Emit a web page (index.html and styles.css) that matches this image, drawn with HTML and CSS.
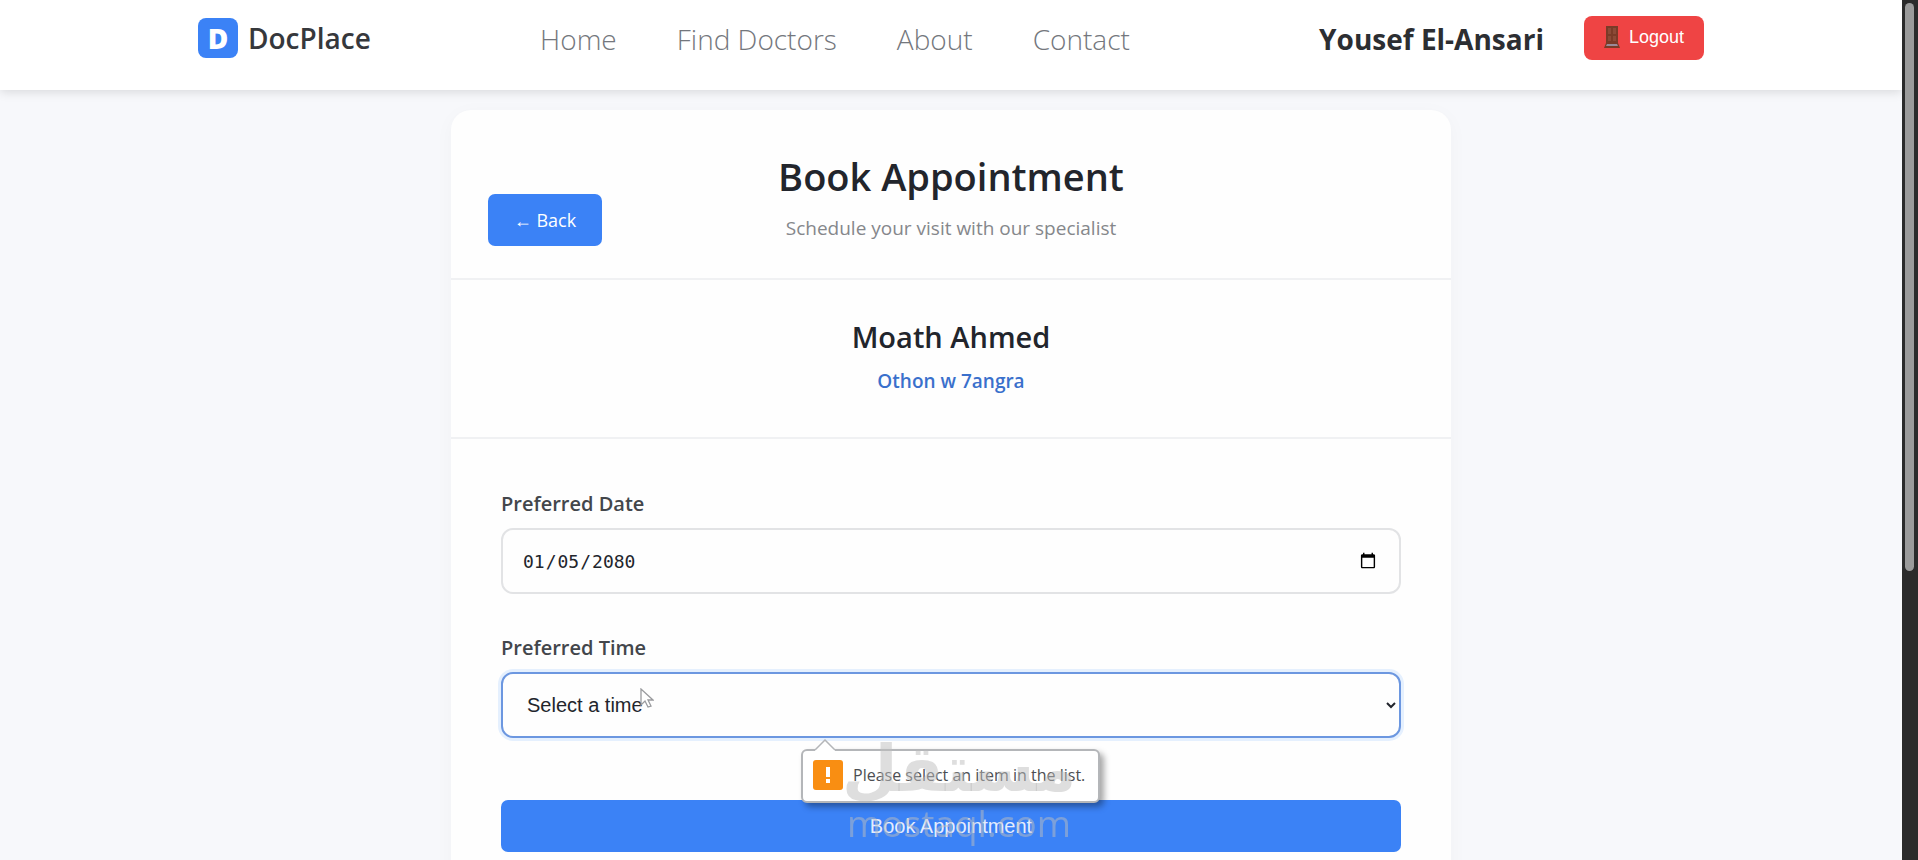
FILE: index.html
```html
<!DOCTYPE html>
<html lang="en">
<head>
<meta charset="utf-8">
<title>DocPlace - Book Appointment</title>
<link rel="stylesheet" href="styles.css">
</head>
<body>
<div class="window">
  <div class="page">
    <header class="navbar">
      <div class="navbar-inner">
        <a class="brand" href="#"><span class="brand-mark">D</span><span>DocPlace</span></a>
        <nav class="nav-links">
          <a href="#">Home</a>
          <a href="#">Find Doctors</a>
          <a href="#">About</a>
          <a href="#">Contact</a>
        </nav>
        <div class="account">
          <span class="user-name">Yousef El-Ansari</span>
          <button class="logout" type="button">
            <svg class="door" viewBox="0 0 16 22" aria-hidden="true">
              <path fill="#7a3b28" d="M2 0h12v17l2 5H0l2-5z"/>
              <path fill="#8c4a37" d="M4 2h3v6H4zM9 2h3v6H9zM4 10h3v5H4zM9 10h3v5H9z"/>
              <path fill="#9a8a98" d="M3 18h10l1 2H2z"/>
            </svg>
            <span>Logout</span>
          </button>
        </div>
      </div>
    </header>
    <main class="card">
      <div class="card-header">
        <button class="back" type="button">← Back</button>
        <h1>Book Appointment</h1>
        <p>Schedule your visit with our specialist</p>
      </div>
      <section class="doctor">
        <h2>Moath Ahmed</h2>
        <p>Othon w 7angra</p>
      </section>
      <form class="booking">
        <div class="field">
          <label for="date">Preferred Date</label>
          <input class="control date" id="date" type="date" value="2080-01-05">
        </div>
        <div class="field">
          <label for="time">Preferred Time</label>
          <select class="control time" id="time" required><option value="">Select a time</option></select>
          <div class="validation" role="alert">
            <svg class="validation-arrow" viewBox="0 0 20 12" aria-hidden="true"><path d="M0 11 10 1l10 10v1H0z" fill="#fff"/><path d="M0 11 10 1l10 10" fill="none" stroke="#b4b6b9" stroke-width="1.5"/></svg>
            <svg class="validation-icon" viewBox="0 0 30 30" aria-hidden="true"><rect width="30" height="30" rx="3" fill="#f98e12"/><path fill="#fff" d="M13 7h4v10h-4zM13 19h4v4h-4z"/></svg>
            <span>Please select an item in the list.</span>
          </div>
        </div>
        <button class="submit" type="button">Book Appointment</button>
      </form>
    </main>
  </div>
  <div class="scrollbar"><div class="thumb"></div></div>
</div>
<div class="watermark" aria-hidden="true"><span class="watermark-ar" lang="ar">مستقل</span><span class="watermark-en">mostaql.com</span></div>
<svg class="cursor" viewBox="0 0 14 20" aria-hidden="true"><path d="M1 1v16l4-4 3 6 3-1-3-6h5z" fill="#fff" stroke="#9a9b9e" stroke-width="1.3"/></svg>
</body>
</html>
```
FILE: styles.css
```css
* { box-sizing: border-box; }
body {
  margin: 0;
  font-family: "Open Sans", "Noto Sans", sans-serif;
  color: #22252c;
  background: #f7f8fb;
}
h1, h2, p { margin: 0; }
a { color: inherit; text-decoration: none; }
button { border: 0; font-family: inherit; color: #fff; }

.window { display: flex; height: 100vh; overflow: hidden; }
.page { flex: 1; }
.scrollbar { width: 16px; padding: 3px 4px 0 3px; background: #2b2b2b; }
.thumb { height: 66vh; border-radius: 5px; background: #9b9b9b; }

.navbar {
  height: 90px;
  padding: 0 24px;
  background: #fff;
  box-shadow: 0 2px 10px rgba(0, 0, 0, 0.13);
}
.navbar-inner {
  display: flex;
  justify-content: space-between;
  max-width: 1506px;
  margin: 0 auto;
  padding-top: 16px;
}
.brand {
  display: flex;
  align-items: center;
  gap: 10px;
  height: 44px;
  font-size: 28px;
  font-weight: 600;
  color: #36383c;
}
.brand-mark {
  display: grid;
  place-items: center;
  width: 40px;
  height: 40px;
  border-radius: 8px;
  background: #3b82f6;
  color: #fff;
  font-size: 28px;
  font-weight: 800;
}
.nav-links {
  display: flex;
  gap: 60px;
  padding-right: 20px;
  font-size: 28px;
  font-weight: 300;
  line-height: 46px;
  color: #74777d;
}
.account { display: flex; gap: 40px; }
.user-name { font-size: 28px; font-weight: 700; line-height: 46px; color: #2c2e32; }
.logout {
  display: flex;
  align-items: center;
  gap: 9px;
  height: 44px;
  padding: 0 20px 2px;
  border-radius: 8px;
  background: #ef4444;
  font: 18px "Liberation Sans", sans-serif;
}
.door { width: 16px; height: 22px; }

.card {
  max-width: 1000px;
  margin: 20px auto 0;
  border-radius: 20px;
  background: #fefefe;
  box-shadow: 0 4px 20px rgba(0, 0, 0, 0.03);
}
.card-header {
  position: relative;
  padding: 40px 36px 36px;
  border-bottom: 2px solid #f0f1f3;
  text-align: center;
}
.card-header h1 { font-size: 38px; font-weight: 600; line-height: 52px; }
.card-header p { font-size: 19px; line-height: 28px; margin-top: 12px; color: #85878b; }
.back {
  position: absolute;
  left: 37px;
  bottom: 32px;
  width: 114px;
  height: 52px;
  border-radius: 7px;
  background: #3b82f6;
  font-size: 18px;
}
.doctor { padding: 36px 36px 42px; border-bottom: 2px solid #f0f1f3; text-align: center; }
.doctor h2 { font-size: 29px; font-weight: 600; line-height: 42px; }
.doctor p { font-size: 19px; font-weight: 600; line-height: 28px; margin-top: 9px; color: #3a70cc; }

.booking { padding: 50px; }
.field { position: relative; margin-bottom: 39px; }
.field label {
  display: block;
  margin-bottom: 9px;
  font-size: 20px;
  font-weight: 600;
  line-height: 30px;
  color: #43464b;
}
.control {
  display: block;
  width: 100%;
  height: 66px;
  border: 2px solid #e2e3e5;
  border-radius: 12px;
  background: #fefefe;
  color: #22252c;
  outline: 0;
}
.date { padding: 0 20px 0 19px; font: 18px "DejaVu Sans Mono", monospace; }
.time {
  padding: 0 6px 0 20px;
  border-color: #6c97e0;
  box-shadow: 0 0 0 3px #e5f0fe;
  font: 20px "Liberation Sans", sans-serif;
}
.validation {
  position: absolute;
  z-index: 1;
  top: 116px;
  left: 300px;
  display: flex;
  align-items: center;
  gap: 10px;
  height: 54px;
  padding: 0 13px 2px 10px;
  border: 2px solid #b4b6b9;
  border-radius: 6px;
  background: #fff;
  box-shadow: 4px 4px 6px rgba(0, 0, 0, 0.35);
  font-size: 16px;
  color: #4c4e52;
  white-space: nowrap;
}
.validation-arrow { position: absolute; top: -12px; left: 12px; width: 20px; height: 12px; }
.validation-icon { width: 30px; height: 30px; }
.submit {
  display: block;
  width: 100%;
  height: 52px;
  margin-top: 62px;
  border-radius: 7px;
  background: #3b82f6;
  color: #e4edfd;
  font: 20px "Liberation Sans", sans-serif;
}

.watermark {
  position: fixed;
  z-index: 2;
  bottom: 15px;
  left: 50%;
  display: flex;
  flex-direction: column;
  align-items: center;
  transform: translateX(-50%);
  color: rgba(190, 190, 190, 0.5);
  pointer-events: none;
}
.watermark-ar { font: bold 64px/64px "DejaVu Sans", sans-serif; }
.watermark-en { font: 37px/44px "Open Sans", sans-serif; }
.cursor { position: fixed; z-index: 3; top: 688px; left: 640px; width: 14px; height: 20px; }
```
